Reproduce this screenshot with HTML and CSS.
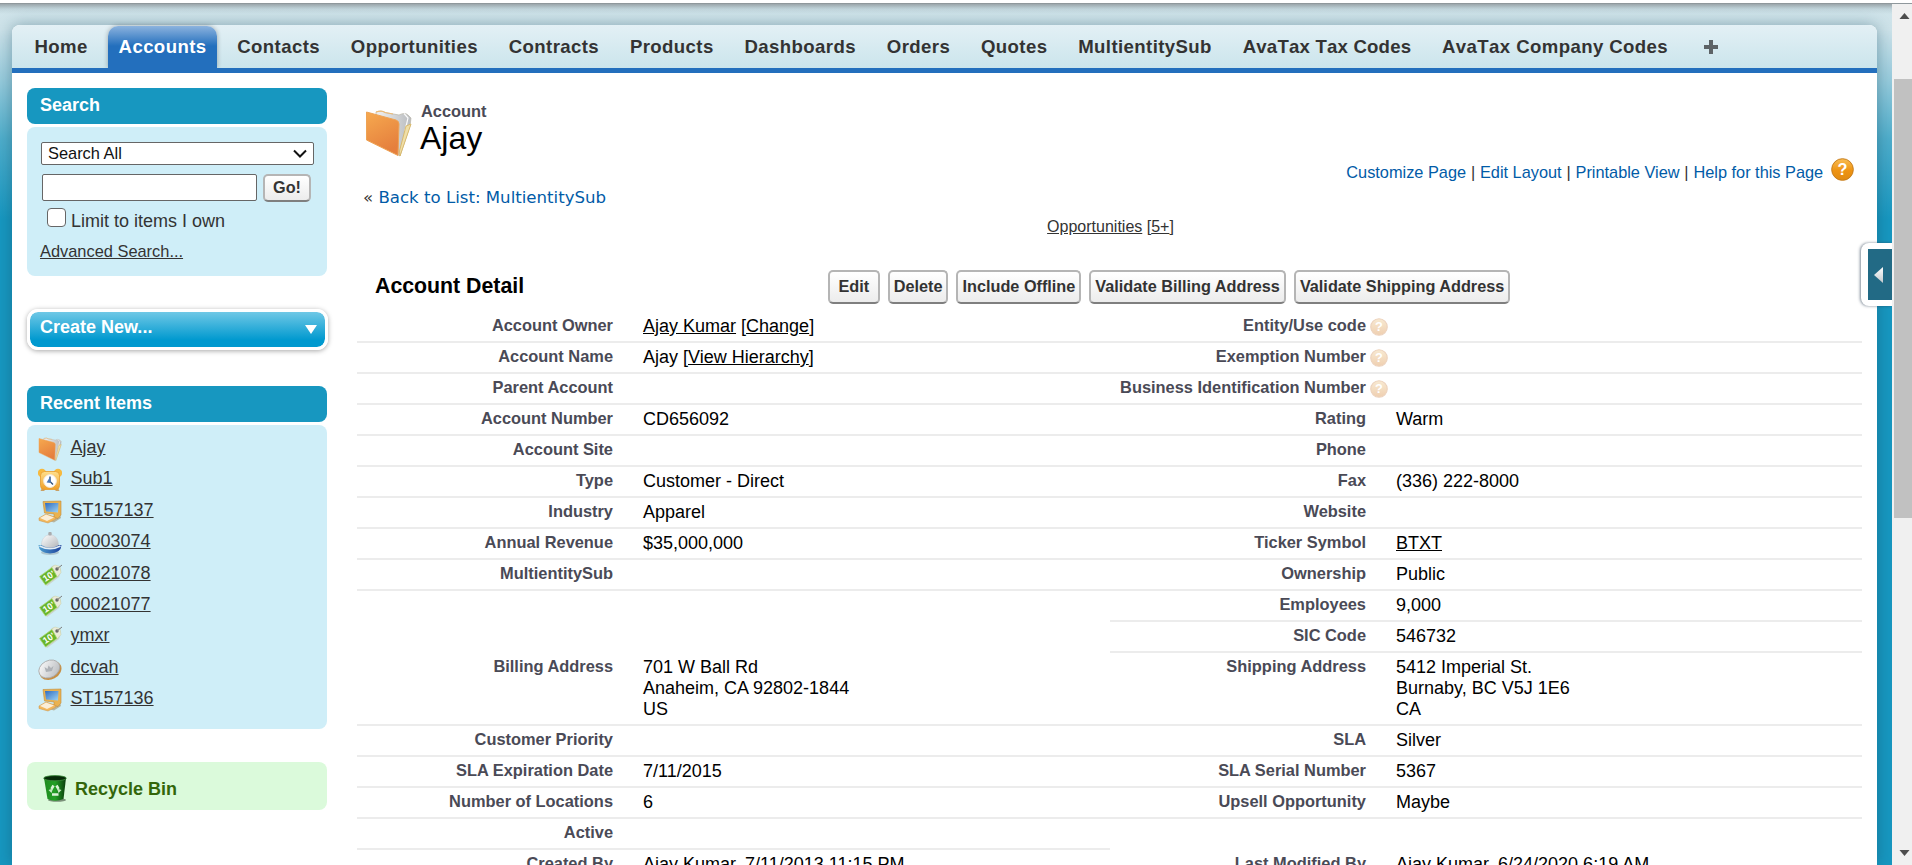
FILE: index.html
```html
<!DOCTYPE html>
<html lang="en">
<head>
<meta charset="utf-8">
<title>Account: Ajay</title>
<link rel="stylesheet" href="styles.css">
</head>
<body>
<svg class="defs" aria-hidden="true">
  <defs>
    <linearGradient id="gOrange" x1="0" y1="0" x2="0.4" y2="1"><stop offset="0" stop-color="#f6a94f"/><stop offset="1" stop-color="#e57f3d"/></linearGradient>
    <linearGradient id="gPaper" x1="0" y1="0" x2="1" y2="0"><stop offset="0" stop-color="#f1f1f1"/><stop offset="1" stop-color="#b9bcc0"/></linearGradient>
    <linearGradient id="gScreen" x1="0" y1="0" x2="1" y2="1"><stop offset="0" stop-color="#2f6cc0"/><stop offset="1" stop-color="#9fd4f5"/></linearGradient>
    <linearGradient id="gGold" x1="0" y1="0" x2="0" y2="1"><stop offset="0" stop-color="#ffdf8c"/><stop offset="1" stop-color="#ef9f28"/></linearGradient>
    <linearGradient id="gSilver" x1="0" y1="0" x2="1" y2="1"><stop offset="0" stop-color="#ffffff"/><stop offset="1" stop-color="#b3b6ba"/></linearGradient>
    <linearGradient id="gBlue" x1="0" y1="0" x2="1" y2="0"><stop offset="0" stop-color="#4d9ed0"/><stop offset="1" stop-color="#1c409c"/></linearGradient>
    <linearGradient id="gHelp" x1="0" y1="0" x2="0" y2="1"><stop offset="0" stop-color="#f9bd52"/><stop offset="0.55" stop-color="#ee9312"/><stop offset="1" stop-color="#e08a10"/></linearGradient>
    <linearGradient id="gSoft" x1="0" y1="0" x2="0" y2="1"><stop offset="0" stop-color="#f8ead2"/><stop offset="1" stop-color="#efcfb0"/></linearGradient>
    <linearGradient id="gBin" x1="0" y1="0" x2="1" y2="0"><stop offset="0" stop-color="#1f8a1f"/><stop offset="0.5" stop-color="#23a026"/><stop offset="1" stop-color="#0a3c0c"/></linearGradient>
    <linearGradient id="gArrow" x1="0" y1="0" x2="0" y2="1"><stop offset="0" stop-color="#ffffff"/><stop offset="1" stop-color="#c2c8cc"/></linearGradient>
    <symbol id="folder" viewBox="0 0 47 48">
      <path d="M11 5 V3 Q17 1 20 3.500 L34 6 Q40 3 43 6 L46 9 L45 17 L35 47 L30 44 Z" fill="url(#gPaper)" stroke="#b9b4a8" stroke-width=".7"/>
      <path d="M11 3 Q17 1 20 3.500 L28 5" fill="none" stroke="#eebb75" stroke-width="1.200"/>
      <path d="M39 4.500 L43 9 L40 22" fill="none" stroke="#fafafa" stroke-width="1.200"/>
      <path d="M46 15 L35 47 L34.500 42 L41 17 Z" fill="#f0dfa8" stroke="#d8b766" stroke-width=".9"/>
      <path d="M1.500 3 L31 11 Q34 12 34 15 L33 46.500 L1.500 31 Z" fill="url(#gOrange)" stroke="#eea355" stroke-width="1"/>
    </symbol>
    <symbol id="clock" viewBox="0 0 24 24">
      <circle cx="4" cy="5" r="4.200" fill="#f6b93f"/><circle cx="20" cy="5" r="4.200" fill="#f6b93f"/>
      <path d="M4 20 L2.500 23 H6 L8 21 M20 20 L21.500 23 H18 L16 21" fill="#c9a066"/>
      <rect x="2.500" y="3.500" width="19" height="18" rx="4" fill="url(#gGold)" stroke="#e79a2b" stroke-width=".8"/>
      <circle cx="12" cy="13" r="6.400" fill="#fff" stroke="#f5e7cf"/>
      <path d="M12 8.500 V13.500 L15 16.500" fill="none" stroke="#31507a" stroke-width="1.400"/><path d="M12 9 L8.600 14.500 L13 15 Z" fill="#4a78b5"/>
    </symbol>
    <symbol id="computer" viewBox="0 0 24 24">
      <path d="M4 19 L16 22.500 L23 18 L22 15 Z" fill="#b6b49e"/>
      <path d="M5 1.500 L23 1 V15 L20 18.500 L16 17.500 V14 L6.500 13 Z" fill="#eab250" stroke="#c08b3a" stroke-width=".6"/>
      <path d="M7 3 L20.500 3 L20 12.500 L8 11.500 Z" fill="url(#gScreen)"/>
      <path d="M1 18 L8 14 L17 17 L18 19 L10 23 L1 20.500 Z" fill="#f3b75b" stroke="#c8934a" stroke-width=".5"/>
      <path d="M2 18 L8 14.500 L16 17.500 L9 21 Z" fill="#fbeed8"/>
    </symbol>
    <symbol id="bell" viewBox="0 0 24 24">
      <ellipse cx="12" cy="21.500" rx="9" ry="2.400" fill="#8c9ba5" opacity=".5"/>
      <path d="M.5 14 H23.500 Q23 22 12 22.500 Q1 22 .5 14 Z" fill="url(#gBlue)"/>
      <path d="M1.500 15 Q12 20.500 22.500 15" fill="none" stroke="#e3edf5" stroke-width="1.500"/>
      <path d="M3.500 14 C3.500 8 7 3.800 12 3.800 C17 3.800 20.500 8 20.500 14 Q12 19.500 3.500 14 Z" fill="url(#gSilver)" stroke="#c6cad0" stroke-width=".5"/>
      <rect x="10.300" y="1" width="3.400" height="3.500" rx="1" fill="#a9acaf"/>
    </symbol>
    <symbol id="tag" viewBox="0 0 24 24">
      <path d="M2 15 L15 2.500 L22 4 L23 9 L21 14 L9 23 Z" fill="#c9ccc0" opacity=".8"/>
      <path d="M13 4.500 L17 2 L22 3.500 L23 9.500 L19 14 Z" fill="#e9ead8" stroke="#b3b55f" stroke-opacity=".4" stroke-width=".6"/>
      <path d="M1.500 13.500 L14 4.500 L19 13.500 L7.500 22 Z" fill="#69b52a" stroke="#a9d873" stroke-width=".8"/>
      <circle cx="19" cy="6" r="1.700" fill="#666"/><path d="M19 6 L24 2" stroke="#7d7d7d" stroke-width="1"/>
      <text x="4.500" y="16.500" transform="rotate(-33 10 13)" class="tag-num">10'</text>
    </symbol>
    <symbol id="coin" viewBox="0 0 24 24">
      <ellipse cx="12.500" cy="13.500" rx="11.500" ry="8.800" transform="rotate(-28 12.500 13.500)" fill="#c78f45"/>
      <ellipse cx="11.300" cy="12" rx="11" ry="8.400" transform="rotate(-28 11.300 12)" fill="url(#gSilver)" stroke="#a8a8a8" stroke-width=".8"/>
      <path d="M6.500 10 L9.500 12 L10.500 8.500 L13 11 L15.500 9 L14 14 L8 15 Z" fill="#adb1b6"/>
    </symbol>
    <symbol id="bin" viewBox="0 0 24 27">
      <ellipse cx="14" cy="25" rx="9" ry="1.800" fill="#3a4b39" opacity=".6"/>
      <path d="M1 3 H23 L20.500 24 Q12 27.500 4.500 24 Z" fill="url(#gBin)"/>
      <ellipse cx="12" cy="3.200" rx="11.300" ry="2.600" fill="#062b08" stroke="#3c8e3c" stroke-width=".8"/>
      <path d="M8.500 14 L10.500 10.500 M15.500 14 L13.500 10.500 M9 19.500 H15.500" stroke="#d9f2d6" stroke-width="2.600" fill="none"/>
      <path d="M5.500 15 L10 13.500 L8.500 18 Z M18.500 15 L14 13.500 L15.500 18 Z" fill="#c5e8c1"/>
    </symbol>
    <symbol id="help" viewBox="0 0 24 24">
      <circle cx="12" cy="12" r="11.300" fill="url(#gHelp)" stroke="#c67c1c" stroke-width="1"/>
      <text x="12" y="17.800" text-anchor="middle" class="help-mark">?</text>
    </symbol>
    <symbol id="help-soft" viewBox="0 0 24 24">
      <circle cx="12" cy="12" r="11" fill="url(#gSoft)" stroke="#ecd2bd" stroke-width="1.500"/>
      <text x="12" y="17.800" text-anchor="middle" class="help-mark">?</text>
    </symbol>
  </defs>
</svg>
<div class="top-strip"></div>
<div class="viewport">
  <div class="page">
    <div class="frame">
      <nav class="tabs">
        <a class="tab">Home</a><a class="tab active">Accounts</a><a class="tab">Contacts</a><a class="tab">Opportunities</a><a class="tab">Contracts</a><a class="tab">Products</a><a class="tab">Dashboards</a><a class="tab">Orders</a><a class="tab">Quotes</a><a class="tab">MultientitySub</a><a class="tab tight">AvaTax Tax Codes</a><a class="tab">AvaTax Company Codes</a>
        <svg class="plus" viewBox="0 0 14 14"><path d="M5 0H9V5H14V9H9V14H5V9H0V5H5Z" fill="#5d6366"/></svg>
      </nav>
      <div class="columns">
        <aside class="sidebar">
          <h2 class="side-head">Search</h2>
          <section class="side-body search">
            <div class="select">Search All<svg viewBox="0 0 14 9"><path d="M1 1.500L7 7.500L13 1.500" fill="none" stroke="#111" stroke-width="2"/></svg></div>
            <div class="search-row"><input class="field" aria-label="Search"><button class="go">Go!</button></div>
            <div class="limit"><span class="check"></span><label>Limit to items I own</label></div>
            <a class="advanced">Advanced Search...</a>
          </section>
          <div class="create"><span>Create New...</span><i class="caret"></i></div>
          <h2 class="side-head">Recent Items</h2>
          <ul class="side-body recent">
            <li><svg><use href="#folder"/></svg><a>Ajay</a></li>
            <li><svg><use href="#clock"/></svg><a>Sub1</a></li>
            <li><svg><use href="#computer"/></svg><a>ST157137</a></li>
            <li><svg><use href="#bell"/></svg><a>00003074</a></li>
            <li><svg><use href="#tag"/></svg><a>00021078</a></li>
            <li><svg><use href="#tag"/></svg><a>00021077</a></li>
            <li><svg><use href="#tag"/></svg><a>ymxr</a></li>
            <li><svg><use href="#coin"/></svg><a>dcvah</a></li>
            <li><svg><use href="#computer"/></svg><a>ST157136</a></li>
          </ul>
          <div class="recycle"><svg><use href="#bin"/></svg><span>Recycle Bin</span></div>
        </aside>
        <main class="main">
          <header class="title">
            <svg class="title-icon"><use href="#folder"/></svg>
            <div><div class="kind">Account</div><h1>Ajay</h1></div>
          </header>
          <div class="subhead">
            <div class="back">« <a>Back to List: MultientitySub</a></div>
            <div class="links"><a>Customize Page</a> | <a>Edit Layout</a> | <a>Printable View</a> | <a>Help for this Page</a><svg class="help-lg"><use href="#help"/></svg></div>
          </div>
          <div class="related"><a>Opportunities</a> [<a>5+</a>]</div>
          <div class="detail-head">
            <h2>Account Detail</h2>
            <div class="buttons"><button>Edit</button><button>Delete</button><button>Include Offline</button><button>Validate Billing Address</button><button>Validate Shipping Address</button></div>
          </div>
          <div class="detail">
            <dl>
              <div class="row"><dt>Account Owner</dt><dd><a>Ajay Kumar</a> [<a>Change</a>]</dd></div>
              <div class="row"><dt>Account Name</dt><dd>Ajay [<a>View Hierarchy</a>]</dd></div>
              <div class="row"><dt>Parent Account</dt><dd></dd></div>
              <div class="row"><dt>Account Number</dt><dd>CD656092</dd></div>
              <div class="row"><dt>Account Site</dt><dd></dd></div>
              <div class="row"><dt>Type</dt><dd>Customer - Direct</dd></div>
              <div class="row"><dt>Industry</dt><dd>Apparel</dd></div>
              <div class="row"><dt>Annual Revenue</dt><dd>$35,000,000</dd></div>
              <div class="row"><dt>MultientitySub</dt><dd></dd></div>
              <div class="row bare"></div>
              <div class="row bare"></div>
              <div class="row tall"><dt>Billing Address</dt><dd>701 W Ball Rd<br>Anaheim, CA 92802-1844<br>US</dd></div>
              <div class="row"><dt>Customer Priority</dt><dd></dd></div>
              <div class="row"><dt>SLA Expiration Date</dt><dd>7/11/2015</dd></div>
              <div class="row"><dt>Number of Locations</dt><dd>6</dd></div>
              <div class="row"><dt>Active</dt><dd></dd></div>
              <div class="row"><dt>Created By</dt><dd>Ajay Kumar, 7/11/2013 11:15 PM</dd></div>
            </dl>
            <dl>
              <div class="row"><dt>Entity/Use code</dt><svg class="help-sm"><use href="#help-soft"/></svg></div>
              <div class="row"><dt>Exemption Number</dt><svg class="help-sm"><use href="#help-soft"/></svg></div>
              <div class="row"><dt>Business Identification Number</dt><svg class="help-sm"><use href="#help-soft"/></svg></div>
              <div class="row"><dt>Rating</dt><dd>Warm</dd></div>
              <div class="row"><dt>Phone</dt><dd></dd></div>
              <div class="row"><dt>Fax</dt><dd>(336) 222-8000</dd></div>
              <div class="row"><dt>Website</dt><dd></dd></div>
              <div class="row"><dt>Ticker Symbol</dt><dd><a>BTXT</a></dd></div>
              <div class="row"><dt>Ownership</dt><dd>Public</dd></div>
              <div class="row"><dt>Employees</dt><dd>9,000</dd></div>
              <div class="row"><dt>SIC Code</dt><dd>546732</dd></div>
              <div class="row tall"><dt>Shipping Address</dt><dd>5412 Imperial St.<br>Burnaby, BC V5J 1E6<br>CA</dd></div>
              <div class="row"><dt>SLA</dt><dd>Silver</dd></div>
              <div class="row"><dt>SLA Serial Number</dt><dd>5367</dd></div>
              <div class="row"><dt>Upsell Opportunity</dt><dd>Maybe</dd></div>
              <div class="row bare"></div>
              <div class="row"><dt>Last Modified By</dt><dd>Ajay Kumar, 6/24/2020 6:19 AM</dd></div>
            </dl>
          </div>
        </main>
      </div>
    </div>
    <div class="drawer"><div class="drawer-in"><svg viewBox="0 0 12 20"><path d="M11 1V19L1 10Z" fill="url(#gArrow)"/></svg></div></div>
  </div>
  <div class="scrollbar">
    <svg viewBox="0 0 10 6"><path d="M0 6L5 0L10 6Z" fill="#4d4d4d"/></svg>
    <div class="thumb"></div>
    <svg class="down" viewBox="0 0 10 6"><path d="M0 0L5 6L10 0Z" fill="#4d4d4d"/></svg>
  </div>
</div>
</body>
</html>
```
FILE: styles.css
```css
* { box-sizing: border-box; }
html, body { margin: 0; height: 865px; overflow: hidden; }
body { background: #fff; color: #000; font: 18px/21px "Liberation Sans", Arial, sans-serif; }
h1, h2, ul, dl, dd { margin: 0; padding: 0; }
.defs { position: absolute; width: 0; height: 0; }
.tag-num { font: bold 9px "Liberation Sans", sans-serif; fill: #fff; }
.help-mark { font: bold 17px "Liberation Sans", sans-serif; fill: #fff; }

.top-strip { height: 4px; background: #fff; border-bottom: 1px solid #8f989c; }
.viewport { display: flex; height: 861px; }
.page {
  position: relative; flex: 1; padding: 21px 15px 0 12px;
  background:
    linear-gradient(#9ba6ab 0, rgba(170,190,197,.4) 5px, rgba(200,220,228,0) 10px),
    linear-gradient(#d0e4ea 0, #cde2e9 25px, #98cbdc 75px, #4fadcb 135px, #1797c0 215px);
}
.frame { height: 840px; background: #fff; border-radius: 8px 8px 0 0; box-shadow: 0 0 15px rgba(20,70,90,.4); }

.tabs { display: flex; align-items: flex-end; height: 48px; padding-left: 12px; border-bottom: 5px solid #236fbd; border-radius: 8px 8px 0 0; background: linear-gradient(#e3f0f5, #cbe5ec); }
.tab { height: 42px; margin-right: 10px; padding: 10px 10.300px 0 10.500px; font-weight: bold; font-size: 18.600px; line-height: 21px; letter-spacing: .4px; font-kerning: none; color: #333; white-space: nowrap; }
.tab.tight { letter-spacing: .2px; }
.tab.active { color: #fff; background: linear-gradient(#8cb3de 0, #236fbd 20px); border-radius: 10px 10px 0 0; box-shadow: 0 0 5px rgba(0,0,0,.3); clip-path: inset(-5px -5px 0); }
.plus { width: 14px; height: 14px; margin: 0 0 14px 16px; }

.columns { display: flex; padding: 15px 15px 0; height: 792px; }
.sidebar { width: 300px; flex: none; }
.side-head { height: 36px; padding: 6px 13px; border-radius: 8px; background: #1797c0; color: #fff; font-size: 18px; line-height: 22px; }
.side-body { margin-top: 3px; border-radius: 8px; background: #cfeef8; color: #333; }
.search { height: 149px; padding: 15px 13px 0 14px; }
.select { display: flex; align-items: center; justify-content: space-between; height: 23px; padding: 0 6px; border: 1px solid #666; border-radius: 2px; background: #fff; color: #111; font-size: 16.400px; }
.select svg { width: 14px; height: 9px; }
.search-row { display: flex; margin: 9px 0 0 1px; gap: 6px; }
.field { width: 215px; height: 27px; padding: 0; border: 1px solid #666; border-radius: 2px; background: #fff; }
button { border: 2px solid #b5b5b5; border-bottom-color: #7f7f7f; border-radius: 5px; background: linear-gradient(#fff, #ececec); color: #333; font: bold 16.250px/18px "Liberation Sans", Arial, sans-serif; white-space: nowrap; padding: 0; }
.go { width: 48px; height: 28px; padding-bottom: 2px; }
.limit { display: flex; align-items: flex-start; margin-top: 6px; padding-left: 6px; gap: 5px; height: 28px; }
.limit label { line-height: 21px; padding-top: 3px; }
.check { width: 19px; height: 19px; border: 1px solid #666; border-radius: 4px; background: #fff; }
.advanced { display: block; margin: 5px 0 0 -1px; font-size: 16.400px; text-decoration: underline; line-height: 21px; }
.create { display: flex; justify-content: space-between; height: 41px; margin: 33px -1px 36px 0; padding: 5px 8px 0 10px; border: 3px solid #fff; border-radius: 11px; background: linear-gradient(#6fc8e6 0, #0099cf 80%) padding-box; color: #fff; font-weight: bold; box-shadow: 0 1px 5px rgba(0,0,0,.35); }
.caret { width: 0; height: 0; margin-top: 8px; border: 6px solid transparent; border-top: 9px solid #fff; border-bottom: 0; }
.recent { height: 304px; padding: 12px 10px 0; list-style: none; }
.recent li { display: flex; height: 31.400px; gap: 8.500px; }
.recent svg { width: 24px; height: 24px; margin: 0 0 0 1px; flex: none; }
.recent a { text-decoration: underline; line-height: 21px; }
.recycle { display: flex; height: 48px; margin-top: 33px; padding: 13px 16px; border-radius: 8px; background: #dbfadb; color: #33660a; font-weight: bold; gap: 8px; }
.recycle svg { width: 24px; height: 27px; flex: none; }
.recycle span { padding-top: 4px; }

.main { width: 1505px; margin-left: 30px; flex: none; }
.title { display: flex; height: 70px; padding: 14px 0 0 8px; gap: 8px; }
.title-icon { width: 47px; height: 48px; margin-top: 7px; }
.kind { padding-left: 1px; font-weight: bold; font-size: 16.400px; line-height: 18px; color: #4a4a56; }
h1 { font-weight: normal; font-size: 32px; line-height: 36px; }
.subhead { display: flex; justify-content: space-between; height: 59px; padding: 0 8px 0 6px; color: #333; }
.back { padding-top: 29px; font-family: "DejaVu Sans", sans-serif; font-size: 16.600px; white-space: nowrap; }
.back a, .links a { color: #015ba7; }
.links { display: flex; font-size: 16.330px; line-height: 21px; padding-top: 4px; gap: 4.800px; white-space: nowrap; }
.help-lg { width: 23px; height: 23px; margin: -4px 0 0 3px; }
.related { height: 53px; margin-top: -1px; padding-left: 2px; text-align: center; font-size: 16px; color: #333; }
.related a, dd a { text-decoration: underline; }
.detail-head { display: flex; height: 42px; margin-top: 1px; }
.detail-head h2 { width: 471px; padding: 4px 0 0 18px; font-size: 21.300px; line-height: 24px; }
.buttons { display: flex; gap: 8px; }
.buttons button { height: 34px; padding: 0 4px 3px; }
.buttons button:first-child { padding: 0 8.500px 3px; }
.detail { display: grid; grid-template-columns: 753px 752px; }
.row { display: flex; height: 31px; border-bottom: 2px solid #ececec; white-space: nowrap; }
.row.bare { border-bottom-color: transparent; }
.row.tall { height: 73px; }
dt { width: 256px; text-align: right; font-weight: bold; font-size: 16.400px; line-height: 21px; padding-top: 3px; color: #4a4a56; flex: none; }
dd { margin-left: 30px; padding-top: 4px; }
.help-sm { width: 18px; height: 18px; margin: 6px 0 0 4px; }

.drawer { position: absolute; right: 0; top: 239px; width: 31px; height: 63px; padding: 6px 0 6px 7px; background: #fff; border-radius: 8px 0 0 8px; box-shadow: -1px 0 3px rgba(40,60,80,.6); clip-path: inset(-5px 0 -5px -8px); }
.drawer-in { display: flex; align-items: center; height: 51px; padding-left: 5px; background: #226a85; }
.drawer-in svg { width: 11px; height: 18px; }
.scrollbar { position: relative; width: 20px; padding-left: 2px; background: #f0f0f0; display: flex; flex-direction: column; align-items: center; }
.scrollbar svg { width: 11px; height: 6px; margin: 9px 0 0 2px; flex: none; }
.thumb { width: 18px; height: 439px; margin-top: 60px; background: #c1c1c1; }
.scrollbar .down { margin-top: auto; margin-bottom: 9px; }
```
